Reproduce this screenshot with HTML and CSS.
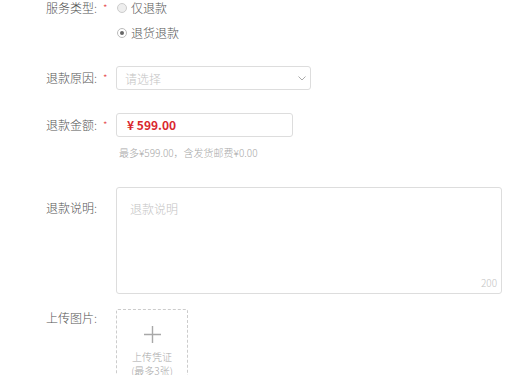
FILE: index.html
```html
<!DOCTYPE html>
<html lang="zh">
<head>
<meta charset="utf-8">
<title>申请退款</title>
<link rel="stylesheet" href="styles.css">
</head>
<body>
<form class="form">
  <div class="row row-type">
    <div class="label">服务类型:</div>
    <div class="req">*</div>
    <div class="radios">
      <label class="radio"><span class="dot"></span>仅退款</label>
      <label class="radio on"><span class="dot"></span>退货退款</label>
    </div>
  </div>

  <div class="row row-reason">
    <div class="label">退款原因:</div>
    <div class="req">*</div>
    <div class="select">
      <span class="ph">请选择</span>
      <svg class="chev" width="8" height="5" viewBox="0 0 8 5"><path d="M0.5 0.5 L4 4 L7.5 0.5" fill="none" stroke="#aaa" stroke-width="1"/></svg>
    </div>
  </div>

  <div class="row row-amount">
    <div class="label">退款金额:</div>
    <div class="req">*</div>
    <div class="col">
      <div class="amount">¥ 599.00</div>
      <div class="hint">最多¥599.00，含发货邮费¥0.00</div>
    </div>
  </div>

  <div class="row row-desc">
    <div class="label">退款说明:</div>
    <div class="req"></div>
    <div class="textarea">
      <span class="ph">退款说明</span>
      <span class="count">200</span>
    </div>
  </div>

  <div class="row row-upload">
    <div class="label">上传图片:</div>
    <div class="req"></div>
    <div class="upload">
      <svg class="plus" width="17" height="17" viewBox="0 0 17 17"><path d="M8.5 0 V17 M0 8.5 H17" stroke="#a8a8a8" stroke-width="1.4"/></svg>
      <div class="up-text">上传凭证</div>
      <div class="up-text">(最多3张)</div>
    </div>
  </div>
</form>
</body>
</html>
```

FILE: styles.css
```css
html, body {
  margin: 0;
  padding: 0;
  background: #fff;
}
body {
  font-family: "Noto Sans CJK SC", "Noto Sans", sans-serif;
  font-size: 12px;
  font-weight: 300;
  color: #555;
  overflow: hidden;
}
.form {
  display: flex;
  flex-direction: column;
  padding-top: 1px;
}
.row {
  display: flex;
  align-items: flex-start;
}
.label {
  width: 97px;
  text-align: right;
  line-height: 14px;
  color: #555;
  flex: none;
}
.req {
  width: 19px;
  flex: none;
  box-sizing: border-box;
  padding-left: 6px;
  color: #e4393c;
  font-size: 10px;
  line-height: 14px;
}
.radios {
  display: flex;
  flex-direction: column;
  gap: 11px;
}
.radio {
  display: flex;
  align-items: center;
  height: 14px;
  line-height: 14px;
  color: #555;
}
.dot {
  width: 8px;
  height: 8px;
  border: 1px solid #ccc;
  border-radius: 50%;
  background: #eee;
  margin-left: 1px;
  margin-right: 4px;
  box-sizing: content-box;
  position: relative;
}
.radio.on .dot {
  background: #fff;
  border-color: #bbb;
}
.radio.on .dot::after {
  content: "";
  position: absolute;
  left: 2px;
  top: 2px;
  width: 4px;
  height: 4px;
  border-radius: 50%;
  background: #666;
}
.row-reason {
  margin-top: 26px;
}
.row-reason .label, .row-reason .req,
.row-amount .label, .row-amount .req {
  line-height: 24px;
}
.select {
  width: 195px;
  height: 24px;
  box-sizing: border-box;
  border: 1px solid #ddd;
  border-radius: 3px;
  display: flex;
  align-items: center;
  justify-content: space-between;
  padding: 0 4px 0 8px;
}
.ph {
  color: #c4c4c4;
}
.row-amount {
  margin-top: 23px;
}
.col {
  display: flex;
  flex-direction: column;
}
.amount {
  width: 177px;
  height: 24px;
  box-sizing: border-box;
  border: 1px solid #ddd;
  border-radius: 3px;
  padding-left: 10px;
  line-height: 22px;
  color: #d9272e;
  font-weight: bold;
  font-size: 12px;
}
.hint {
  margin-top: 9px;
  padding-left: 3px;
  font-size: 10px;
  line-height: 14px;
  color: #a8a8a8;
}
.row-desc {
  margin-top: 27px;
}
.row-desc .label {
  padding-top: 14px;
}
.textarea {
  width: 386px;
  height: 107px;
  box-sizing: border-box;
  border: 1px solid #ddd;
  border-radius: 3px;
  padding: 14px 13px;
  position: relative;
  line-height: 14px;
}
.count {
  position: absolute;
  right: 4px;
  bottom: 4px;
  font-size: 10px;
  line-height: 12px;
  color: #c4c4c4;
}
.row-upload {
  margin-top: 15px;
}
.row-upload .label {
  line-height: 18px;
}
.upload {
  width: 72px;
  height: 80px;
  box-sizing: border-box;
  border: 1px dashed #ccc;
  border-radius: 2px;
  display: flex;
  flex-direction: column;
  align-items: center;
  padding-top: 16px;
}
.plus {
  display: block;
  margin-bottom: 7px;
}
.up-text {
  font-size: 10px;
  line-height: 14px;
  color: #a8a8a8;
}
```
